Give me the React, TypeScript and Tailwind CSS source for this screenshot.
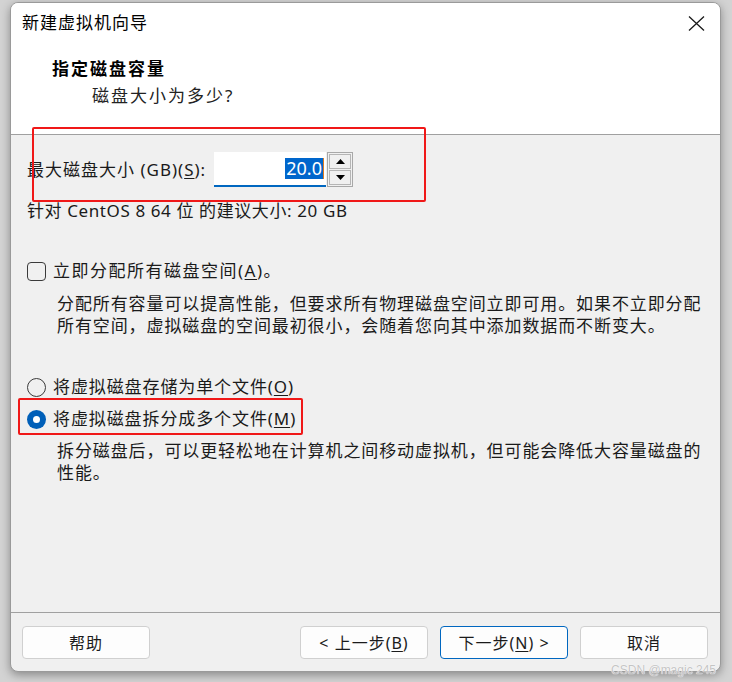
import React from "react";

const cjk = "font-['Noto_Sans','Noto_Sans_CJK_SC',sans-serif]";

function Btn({ children, primary }: { children: React.ReactNode; primary?: boolean }) {
  return (
    <button
      className={
        "w-[128px] h-[33px] rounded-[4px] bg-[#fdfdfd] text-[16px] text-[#1b1b1b] flex items-center justify-center tracking-[1px] " +
        (primary ? "border border-[#0067c0]" : "border border-[#d0d0d0]")
      }
    >
      {children}
    </button>
  );
}

export default function App() {
  return (
    <div className={`relative w-[732px] h-[682px] bg-[#d3d3d3] pl-[10px] pt-[2px] overflow-hidden ${cjk}`}>
      {/* 对话框 */}
      <div className="relative w-[711px] h-[670px] bg-[#f0f0f0] rounded-[8px] border border-[#9a9a9a] shadow-[0_3px_10px_rgba(0,0,0,0.35)] flex flex-col overflow-hidden">
        {/* 标题 + 页头 */}
        <div className="h-[131px] bg-white flex flex-col">
          <div className="h-[40px] flex items-center justify-between pl-[11px] pr-[15px]">
            <span className="text-[17px] text-black tracking-[1px]">新建虚拟机向导</span>
            <svg width="17" height="15" viewBox="0 0 17 15">
              <path d="M1 0.5 L16 14.5 M16 0.5 L1 14.5" stroke="#1a1a1a" strokeWidth="1.3" fill="none" />
            </svg>
          </div>
          <div className="pl-[41px] mt-[15px] h-[22px] flex items-center text-[17px] font-bold text-black tracking-[2px]">
            指定磁盘容量
          </div>
          <div className="pl-[81px] mt-[5px] h-[22px] flex items-center text-[17px] text-[#222] tracking-[2px]">
            磁盘大小为多少?
          </div>
        </div>
        <div className="h-px bg-[#a0a0a0]" />

        {/* 内容 */}
        <div className="flex-1 pl-[16px] text-[#1a1a1a]">
          <div className="mt-[17px] h-[35px] flex items-center">
            <span className="text-[17px] tracking-[1px] w-[187px]">
              最大磁盘大小 (GB)(<span className="underline underline-offset-2">S</span>):
            </span>
            <div className="w-[112px] h-[35px] bg-white border-b-2 border-[#0067c0] flex items-center justify-end pr-[2px]">
              <span className="bg-[#0066cc] text-white text-[18px] leading-[21px] px-[1px]">20.0</span>
              <span className="w-px h-[21px] bg-[#e07a1f]" />
            </div>
            <div className="ml-px w-[26px] h-[35px] border border-[#a8a8a8] flex flex-col p-px gap-px bg-[#f0f0f0]">
              <div className="flex-1 border border-[#b5b5b5] bg-[#f0f0f0] flex items-center justify-center">
                <svg width="9" height="5" viewBox="0 0 9 5"><path d="M4.5 0 L9 5 L0 5 Z" fill="#000" /></svg>
              </div>
              <div className="flex-1 border border-[#b5b5b5] bg-[#f0f0f0] flex items-center justify-center">
                <svg width="9" height="5" viewBox="0 0 9 5"><path d="M0 0 L9 0 L4.5 5 Z" fill="#000" /></svg>
              </div>
            </div>
          </div>

          <div className="mt-[13px] h-[22px] flex items-center text-[17px] tracking-[0.6px]">
            针对 CentOS 8 64 位 的建议大小: 20 GB
          </div>

          <div className="mt-[38px] h-[22px] flex items-center gap-[7px]">
            <span className="w-[19px] h-[19px] rounded-[4px] border border-[#3a3a3a]" />
            <span className="text-[17px] tracking-[1.5px]">
              立即分配所有磁盘空间(<span className="underline underline-offset-2">A</span>)。
            </span>
          </div>

          <div className="mt-[11px] ml-[30px] text-[17px] leading-[22px] tracking-[0.9px] whitespace-nowrap">
            <p>分配所有容量可以提高性能，但要求所有物理磁盘空间立即可用。如果不立即分配</p>
            <p>所有空间，虚拟磁盘的空间最初很小，会随着您向其中添加数据而不断变大。</p>
          </div>

          <div className="mt-[39px] h-[22px] flex items-center gap-[7px]">
            <span className="w-[19px] h-[19px] rounded-full border border-[#3a3a3a]" />
            <span className="text-[17px] tracking-[0.9px]">
              将虚拟磁盘存储为单个文件(<span className="underline underline-offset-2">O</span>)
            </span>
          </div>

          <div className="mt-[10px] h-[22px] flex items-center gap-[7px]">
            <span className="w-[19px] h-[19px] rounded-full bg-[#005fb8] flex items-center justify-center">
              <span className="w-[7px] h-[7px] rounded-full bg-white" />
            </span>
            <span className="text-[17px] tracking-[0.9px]">
              将虚拟磁盘拆分成多个文件(<span className="underline underline-offset-2">M</span>)
            </span>
          </div>

          <div className="mt-[10px] ml-[30px] text-[17px] leading-[22px] tracking-[0.9px] whitespace-nowrap">
            <p>拆分磁盘后，可以更轻松地在计算机之间移动虚拟机，但可能会降低大容量磁盘的</p>
            <p>性能。</p>
          </div>
        </div>

        {/* 底部按钮 */}
        <div className="h-px bg-[#a0a0a0]" />
        <div className="h-[58px] flex items-start pt-[13px] pl-[11px] pr-[12px]">
          <Btn>帮助</Btn>
          <div className="flex-1" />
          <div className="flex gap-[12px]">
            <Btn>
              &lt; 上一步(<span className="underline underline-offset-2">B</span>)
            </Btn>
            <Btn primary>
              下一步(<span className="underline underline-offset-2">N</span>) &gt;
            </Btn>
            <Btn>取消</Btn>
          </div>
        </div>
      </div>

      {/* 红色标注框 */}
      <div className="absolute left-[32px] top-[127px] w-[394px] h-[75px] border-2 border-[#f01818] rounded-[2px]" />
      <div className="absolute left-[18px] top-[398px] w-[285px] h-[37px] border-2 border-[#f01818] rounded-[2px]" />

      {/* 水印 */}
      <div className="absolute right-[16px] top-[661px] text-[12px] text-[#c4c4c4] font-['Liberation_Sans',sans-serif] [text-shadow:0_0_1px_#fff,0_0_1px_#fff]">
        CSDN @magic 245
      </div>
    </div>
  );
}
